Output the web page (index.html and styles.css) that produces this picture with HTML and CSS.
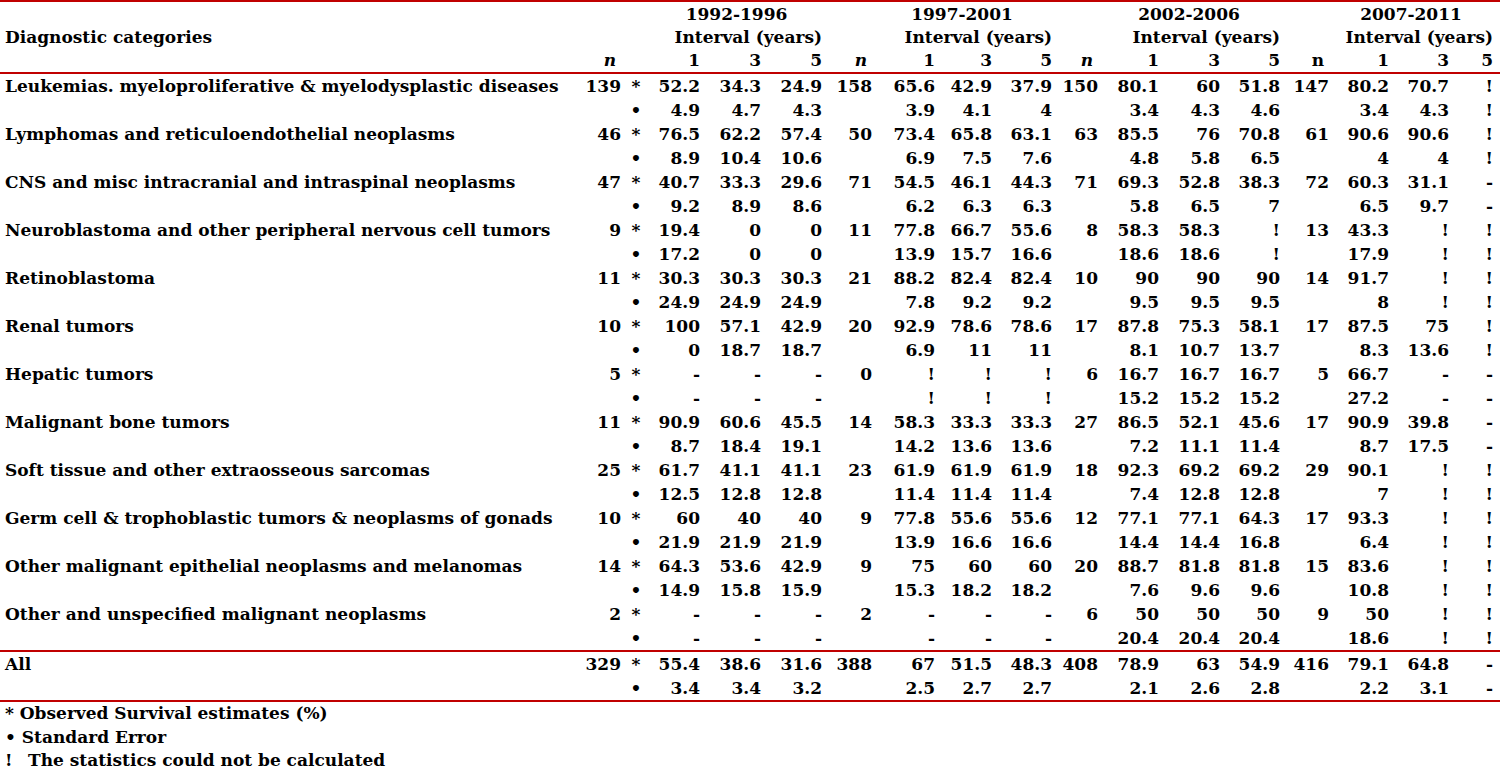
FILE: index.html
```html
<!DOCTYPE html>
<html lang="en">
<head>
<meta charset="utf-8">
<title>Survival by diagnostic category</title>
<link rel="stylesheet" href="styles.css">
</head>
<body>
<div class="sheet">
  <div class="head grid">
    <span class="lab hlab">Diagnostic categories</span>
    <span class="yr g1">1992-1996</span>
    <span class="yr g2">1997-2001</span>
    <span class="yr g3">2002-2006</span>
    <span class="yr g4">2007-2011</span>
    <span class="iv g1">Interval (years)</span>
    <span class="iv g2">Interval (years)</span>
    <span class="iv g3">Interval (years)</span>
    <span class="iv g4">Interval (years)</span>
    <span class="hn c2"><i>n</i></span>
    <span class="hd c4">1</span><span class="hd c5">3</span><span class="hd c6">5</span>
    <span class="hn c7"><i>n</i></span>
    <span class="hd c8">1</span><span class="hd c9">3</span><span class="hd c10">5</span>
    <span class="hn c11"><i>n</i></span>
    <span class="hd c12">1</span><span class="hd c13">3</span><span class="hd c14">5</span>
    <span class="hn c15">n</span>
    <span class="hd c16">1</span><span class="hd c17">3</span><span class="hd c18">5</span>
  </div>

  <div class="body grid">
    <span class="lab">Leukemias. myeloproliferative &amp; myelodysplastic diseases</span><span>139</span><span class="mk">*</span><span>52.2</span><span>34.3</span><span>24.9</span><span>158</span><span>65.6</span><span>42.9</span><span>37.9</span><span>150</span><span>80.1</span><span>60</span><span>51.8</span><span>147</span><span>80.2</span><span>70.7</span><span>!</span>
    <span class="lab"></span><span></span><span class="mk">•</span><span>4.9</span><span>4.7</span><span>4.3</span><span></span><span>3.9</span><span>4.1</span><span>4</span><span></span><span>3.4</span><span>4.3</span><span>4.6</span><span></span><span>3.4</span><span>4.3</span><span>!</span>

    <span class="lab">Lymphomas and reticuloendothelial neoplasms</span><span>46</span><span class="mk">*</span><span>76.5</span><span>62.2</span><span>57.4</span><span>50</span><span>73.4</span><span>65.8</span><span>63.1</span><span>63</span><span>85.5</span><span>76</span><span>70.8</span><span>61</span><span>90.6</span><span>90.6</span><span>!</span>
    <span class="lab"></span><span></span><span class="mk">•</span><span>8.9</span><span>10.4</span><span>10.6</span><span></span><span>6.9</span><span>7.5</span><span>7.6</span><span></span><span>4.8</span><span>5.8</span><span>6.5</span><span></span><span>4</span><span>4</span><span>!</span>

    <span class="lab">CNS and misc intracranial and intraspinal neoplasms</span><span>47</span><span class="mk">*</span><span>40.7</span><span>33.3</span><span>29.6</span><span>71</span><span>54.5</span><span>46.1</span><span>44.3</span><span>71</span><span>69.3</span><span>52.8</span><span>38.3</span><span>72</span><span>60.3</span><span>31.1</span><span>-</span>
    <span class="lab"></span><span></span><span class="mk">•</span><span>9.2</span><span>8.9</span><span>8.6</span><span></span><span>6.2</span><span>6.3</span><span>6.3</span><span></span><span>5.8</span><span>6.5</span><span>7</span><span></span><span>6.5</span><span>9.7</span><span>-</span>

    <span class="lab">Neuroblastoma and other peripheral nervous cell tumors</span><span>9</span><span class="mk">*</span><span>19.4</span><span>0</span><span>0</span><span>11</span><span>77.8</span><span>66.7</span><span>55.6</span><span>8</span><span>58.3</span><span>58.3</span><span>!</span><span>13</span><span>43.3</span><span>!</span><span>!</span>
    <span class="lab"></span><span></span><span class="mk">•</span><span>17.2</span><span>0</span><span>0</span><span></span><span>13.9</span><span>15.7</span><span>16.6</span><span></span><span>18.6</span><span>18.6</span><span>!</span><span></span><span>17.9</span><span>!</span><span>!</span>

    <span class="lab">Retinoblastoma</span><span>11</span><span class="mk">*</span><span>30.3</span><span>30.3</span><span>30.3</span><span>21</span><span>88.2</span><span>82.4</span><span>82.4</span><span>10</span><span>90</span><span>90</span><span>90</span><span>14</span><span>91.7</span><span>!</span><span>!</span>
    <span class="lab"></span><span></span><span class="mk">•</span><span>24.9</span><span>24.9</span><span>24.9</span><span></span><span>7.8</span><span>9.2</span><span>9.2</span><span></span><span>9.5</span><span>9.5</span><span>9.5</span><span></span><span>8</span><span>!</span><span>!</span>

    <span class="lab">Renal tumors</span><span>10</span><span class="mk">*</span><span>100</span><span>57.1</span><span>42.9</span><span>20</span><span>92.9</span><span>78.6</span><span>78.6</span><span>17</span><span>87.8</span><span>75.3</span><span>58.1</span><span>17</span><span>87.5</span><span>75</span><span>!</span>
    <span class="lab"></span><span></span><span class="mk">•</span><span>0</span><span>18.7</span><span>18.7</span><span></span><span>6.9</span><span>11</span><span>11</span><span></span><span>8.1</span><span>10.7</span><span>13.7</span><span></span><span>8.3</span><span>13.6</span><span>!</span>

    <span class="lab">Hepatic tumors</span><span>5</span><span class="mk">*</span><span>-</span><span>-</span><span>-</span><span>0</span><span>!</span><span>!</span><span>!</span><span>6</span><span>16.7</span><span>16.7</span><span>16.7</span><span>5</span><span>66.7</span><span>-</span><span>-</span>
    <span class="lab"></span><span></span><span class="mk">•</span><span>-</span><span>-</span><span>-</span><span></span><span>!</span><span>!</span><span>!</span><span></span><span>15.2</span><span>15.2</span><span>15.2</span><span></span><span>27.2</span><span>-</span><span>-</span>

    <span class="lab">Malignant bone tumors</span><span>11</span><span class="mk">*</span><span>90.9</span><span>60.6</span><span>45.5</span><span>14</span><span>58.3</span><span>33.3</span><span>33.3</span><span>27</span><span>86.5</span><span>52.1</span><span>45.6</span><span>17</span><span>90.9</span><span>39.8</span><span>-</span>
    <span class="lab"></span><span></span><span class="mk">•</span><span>8.7</span><span>18.4</span><span>19.1</span><span></span><span>14.2</span><span>13.6</span><span>13.6</span><span></span><span>7.2</span><span>11.1</span><span>11.4</span><span></span><span>8.7</span><span>17.5</span><span>-</span>

    <span class="lab">Soft tissue and other extraosseous sarcomas</span><span>25</span><span class="mk">*</span><span>61.7</span><span>41.1</span><span>41.1</span><span>23</span><span>61.9</span><span>61.9</span><span>61.9</span><span>18</span><span>92.3</span><span>69.2</span><span>69.2</span><span>29</span><span>90.1</span><span>!</span><span>!</span>
    <span class="lab"></span><span></span><span class="mk">•</span><span>12.5</span><span>12.8</span><span>12.8</span><span></span><span>11.4</span><span>11.4</span><span>11.4</span><span></span><span>7.4</span><span>12.8</span><span>12.8</span><span></span><span>7</span><span>!</span><span>!</span>

    <span class="lab">Germ cell &amp; trophoblastic tumors &amp; neoplasms of gonads</span><span>10</span><span class="mk">*</span><span>60</span><span>40</span><span>40</span><span>9</span><span>77.8</span><span>55.6</span><span>55.6</span><span>12</span><span>77.1</span><span>77.1</span><span>64.3</span><span>17</span><span>93.3</span><span>!</span><span>!</span>
    <span class="lab"></span><span></span><span class="mk">•</span><span>21.9</span><span>21.9</span><span>21.9</span><span></span><span>13.9</span><span>16.6</span><span>16.6</span><span></span><span>14.4</span><span>14.4</span><span>16.8</span><span></span><span>6.4</span><span>!</span><span>!</span>

    <span class="lab">Other malignant epithelial neoplasms and melanomas</span><span>14</span><span class="mk">*</span><span>64.3</span><span>53.6</span><span>42.9</span><span>9</span><span>75</span><span>60</span><span>60</span><span>20</span><span>88.7</span><span>81.8</span><span>81.8</span><span>15</span><span>83.6</span><span>!</span><span>!</span>
    <span class="lab"></span><span></span><span class="mk">•</span><span>14.9</span><span>15.8</span><span>15.9</span><span></span><span>15.3</span><span>18.2</span><span>18.2</span><span></span><span>7.6</span><span>9.6</span><span>9.6</span><span></span><span>10.8</span><span>!</span><span>!</span>

    <span class="lab">Other and unspecified malignant neoplasms</span><span>2</span><span class="mk">*</span><span>-</span><span>-</span><span>-</span><span>2</span><span>-</span><span>-</span><span>-</span><span>6</span><span>50</span><span>50</span><span>50</span><span>9</span><span>50</span><span>!</span><span>!</span>
    <span class="lab"></span><span></span><span class="mk">•</span><span>-</span><span>-</span><span>-</span><span></span><span>-</span><span>-</span><span>-</span><span></span><span>20.4</span><span>20.4</span><span>20.4</span><span></span><span>18.6</span><span>!</span><span>!</span>
  </div>

  <div class="total grid">
    <span class="lab">All</span><span>329</span><span class="mk">*</span><span>55.4</span><span>38.6</span><span>31.6</span><span>388</span><span>67</span><span>51.5</span><span>48.3</span><span>408</span><span>78.9</span><span>63</span><span>54.9</span><span>416</span><span>79.1</span><span>64.8</span><span>-</span>
    <span class="lab"></span><span></span><span class="mk">•</span><span>3.4</span><span>3.4</span><span>3.2</span><span></span><span>2.5</span><span>2.7</span><span>2.7</span><span></span><span>2.1</span><span>2.6</span><span>2.8</span><span></span><span>2.2</span><span>3.1</span><span>-</span>
  </div>

  <div class="notes">
    <p>* Observed Survival estimates (%)</p>
    <p>• Standard Error</p>
    <p><span class="bang">!</span>The statistics could not be calculated</p>
  </div>
</div>
</body>
</html>
```

FILE: styles.css
```css
html, body {
  margin: 0;
  padding: 0;
  background: #ffffff;
}

body {
  font-family: "DejaVu Serif", "Liberation Serif", serif;
  font-weight: bold;
  font-size: 17px;
  color: #000000;
}

.sheet {
  width: 1500px;
}

.grid {
  display: grid;
  grid-template-columns: 580px 41px 30px 49px 61px 61px 50px 63px 57px 60px 46px 61px 61px 60px 49px 60px 60px 44px;
  width: 1493px;
}

.grid > span {
  text-align: right;
  white-space: nowrap;
}

.grid > .lab {
  text-align: left;
  padding-left: 5px;
}

.grid > .mk {
  text-align: center;
}

/* header */
.head {
  width: 1500px;
  border-top: 2px solid #c00000;
  border-bottom: 2px solid #c00000;
  grid-template-rows: 24px 23px 23px;
  line-height: 23px;
}

.head .hlab {
  grid-column: 1;
  grid-row: 1 / span 3;
  align-self: center;
}

.head .yr {
  grid-row: 1;
  text-align: center;
  line-height: 25px;
}

.head .iv {
  grid-row: 2;
  text-align: right;
}

.head .g1 { grid-column: 4 / span 3; }
.head .g2 { grid-column: 8 / span 3; }
.head .g3 { grid-column: 12 / span 3; }
.head .g4 { grid-column: 16 / span 3; }

.head .hn,
.head .hd {
  grid-row: 3;
}

.head .hn {
  padding-right: 5px;
}

.c2 { grid-column: 2; }
.c4 { grid-column: 4; }
.c5 { grid-column: 5; }
.c6 { grid-column: 6; }
.c7 { grid-column: 7; }
.c8 { grid-column: 8; }
.c9 { grid-column: 9; }
.c10 { grid-column: 10; }
.c11 { grid-column: 11; }
.c12 { grid-column: 12; }
.c13 { grid-column: 13; }
.c14 { grid-column: 14; }
.c15 { grid-column: 15; }
.c16 { grid-column: 16; }
.c17 { grid-column: 17; }
.c18 { grid-column: 18; }

/* body */
.body {
  grid-auto-rows: 24px;
  line-height: 24px;
}

.total {
  width: 1500px;
  grid-auto-rows: 24px;
  line-height: 24px;
  border-top: 2px solid #c00000;
  border-bottom: 2px solid #c00000;
}

/* notes */
.notes {
  padding-left: 5px;
  line-height: 23.5px;
}

.notes p {
  margin: 0;
}

.bang {
  display: inline-block;
  width: 23px;
}
```
